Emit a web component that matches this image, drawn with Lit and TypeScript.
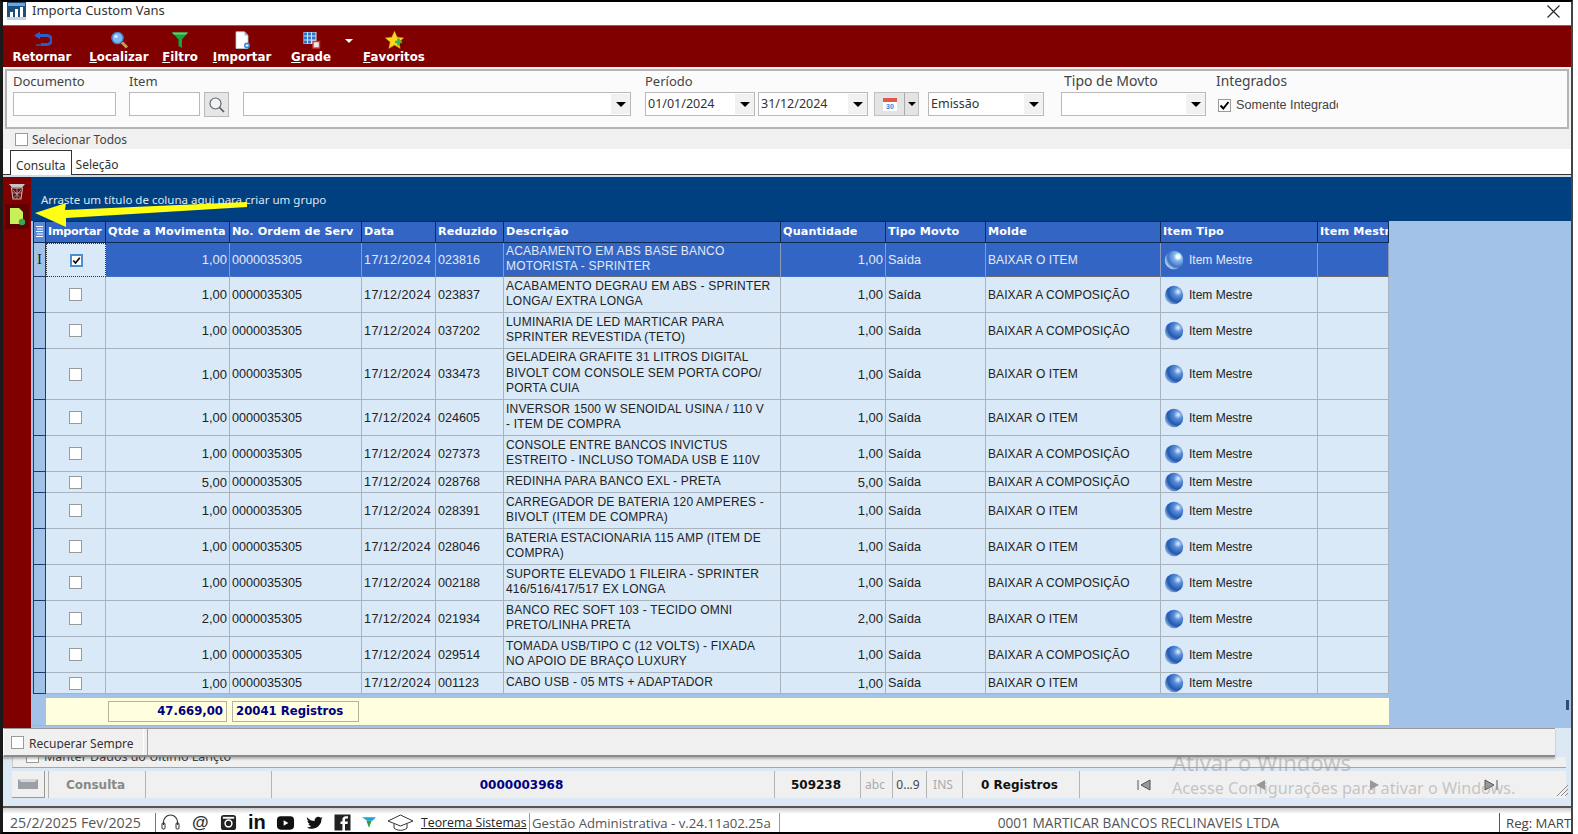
import { LitElement, html, css, svg } from "lit";
import { customElement } from "lit/decorators.js";

interface Row { q: string; red: string; d: string[]; qt: string; molde: string; h: number; }
const B = "BAIXAR O ITEM", C = "BAIXAR A COMPOSIÇÃO";
const rows: Row[] = [
  { q: "1,00", red: "023816", d: ["ACABAMENTO EM ABS BASE BANCO", "MOTORISTA - SPRINTER"], qt: "1,00", molde: B, h: 34 },
  { q: "1,00", red: "023837", d: ["ACABAMENTO DEGRAU EM ABS - SPRINTER", "LONGA/ EXTRA LONGA"], qt: "1,00", molde: C, h: 36 },
  { q: "1,00", red: "037202", d: ["LUMINARIA DE LED MARTICAR PARA", "SPRINTER REVESTIDA (TETO)"], qt: "1,00", molde: C, h: 36 },
  { q: "1,00", red: "033473", d: ["GELADEIRA GRAFITE 31 LITROS DIGITAL", "BIVOLT COM CONSOLE SEM PORTA COPO/", "PORTA CUIA"], qt: "1,00", molde: B, h: 51 },
  { q: "1,00", red: "024605", d: ["INVERSOR 1500 W SENOIDAL USINA / 110 V", "- ITEM DE COMPRA"], qt: "1,00", molde: B, h: 36 },
  { q: "1,00", red: "027373", d: ["CONSOLE ENTRE BANCOS INVICTUS", "ESTREITO - INCLUSO TOMADA USB E 110V"], qt: "1,00", molde: C, h: 36 },
  { q: "5,00", red: "028768", d: ["REDINHA PARA BANCO EXL - PRETA"], qt: "5,00", molde: C, h: 21 },
  { q: "1,00", red: "028391", d: ["CARREGADOR DE BATERIA 120 AMPERES -", "BIVOLT (ITEM DE COMPRA)"], qt: "1,00", molde: B, h: 36 },
  { q: "1,00", red: "028046", d: ["BATERIA ESTACIONARIA 115 AMP (ITEM DE", "COMPRA)"], qt: "1,00", molde: B, h: 36 },
  { q: "1,00", red: "002188", d: ["SUPORTE ELEVADO 1 FILEIRA - SPRINTER", "416/516/417/517 EX LONGA"], qt: "1,00", molde: C, h: 36 },
  { q: "2,00", red: "021934", d: ["BANCO REC SOFT 103 - TECIDO OMNI", "PRETO/LINHA PRETA"], qt: "2,00", molde: B, h: 36 },
  { q: "1,00", red: "029514", d: ["TOMADA USB/TIPO C (12 VOLTS) - FIXADA", "NO APOIO DE BRAÇO LUXURY"], qt: "1,00", molde: C, h: 36 },
  { q: "1,00", red: "001123", d: ["CABO USB - 05 MTS + ADAPTADOR"], qt: "1,00", molde: B, h: 21 },
];

const caret = html`<span class="caret"></span>`;
const globe = (pale: boolean) => html`<svg class=${pale ? "globe pale" : "globe"} viewBox="0 0 20 20" width="20" height="20">
  <defs><radialGradient id="g" cx="72%" cy="32%" r="75%"><stop offset="0" stop-color="#eaf2fc"/><stop offset=".3" stop-color="#5b90dc"/><stop offset=".75" stop-color="#2058ae"/><stop offset="1" stop-color="#86a8da"/></radialGradient></defs>
  <circle cx="10" cy="10" r="9.2" fill="url(#g)"/></svg>`;

const icoBack = svg`<path d="M3 4.5 H14 a4.2 4.2 0 0 1 0 9 H8" fill="none" stroke="#2a5ec8" stroke-width="3"/><path d="M7 .8 L1 4.5 L7 8.2Z" fill="#2a5ec8"/><path d="M3 13 h5 v2 h-5z" fill="#2f5fb0" opacity=".7"/>`;
const icoFind = svg`<circle cx="7.5" cy="7" r="5.6" fill="#7db8ef" stroke="#3d7fd0" stroke-width="1.4"/><path d="M12 11.5 L17 16.5" stroke="#c89a5a" stroke-width="3"/><circle cx="6" cy="5.5" r="1.8" fill="#d8ecff"/>`;
const icoFilter = svg`<path d="M1 1.5 H17 L11 8.5 V17 L7.5 15 V8.5Z" fill="#19a33a"/><path d="M1 1.5 H17 L15.4 3.5 H2.6Z" fill="#5bd26d"/>`;
const icoDoc = svg`<path d="M3 .8 H11.5 L15 4.5 V17.5 H3Z" fill="#fff" stroke="#bcc6d4" stroke-width=".8"/><path d="M11.5 .8 V4.5 H15Z" fill="#9fb2cc"/><circle cx="14" cy="14.5" r="3" fill="#3c86d8"/><path d="M12.5 14.5 h3 M14 13 v3" stroke="#fff" stroke-width=".9"/>`;
const icoGrid = svg`<rect x="1.5" y="1" width="13" height="12" fill="#cfe2f8"/><path d="M2 1.5 h3 v3 h-3z M6 1.5 h3 v3 h-3z M10 1.5 h3.5 v3 h-3.5z M2 5.5 h3 v3 h-3z M6 5.5 h3 v3 h-3z M10 5.5 h3.5 v3 h-3.5z M2 9.5 h3 v3 h-3z M6 9.5 h3 v3 h-3z" fill="#2f74c8"/><rect x="11" y="10.5" width="6.5" height="6.5" fill="#e9e9e9" stroke="#d33" stroke-width="1.4"/>`;
const icoStar = svg`<path d="M9.5 .2 L12.2 6.2 L18.6 6.9 L13.8 11 L15.2 17.4 L9.5 14.1 L3.8 17.4 L5.2 11 L.4 6.9 L6.8 6.2Z" fill="#ffd820" stroke="#d9a800" stroke-width=".5"/><path d="M10 11 h7 M13.5 7.5 v7" stroke="#39b54a" stroke-width="2.6"/>`;

@customElement("app-root")
export class AppRoot extends LitElement {
  static styles = css`
    :host { display: block; width: 1578px; height: 834px; overflow: hidden; position: relative; background: #fff; font-family: "Liberation Sans", Arial, sans-serif; font-size: 13px; color: #222; }
    * { box-sizing: border-box; }
    .win { width: 1573px; height: 834px; display: flex; flex-direction: column; border-top: 2px solid #000; border-left: 3px solid #1a1a1a; border-right: 2px solid #444; border-bottom: 2px solid #000; background: #dce9f5; }
    .title { height: 23px; flex: none; background: #fff; display: flex; align-items: flex-start; padding-left: 4px; gap: 6px; font-family: "Noto Sans", sans-serif; font-size: 13px; line-height: 17px; color: #333; }
    .title .x { margin-left: auto; margin-right: 11px; margin-top: 3px; width: 13px; height: 13px; }
    .toolbar { height: 42px; flex: none; background: #800000; display: flex; color: #fff; font: bold 11.8px "DejaVu Sans", sans-serif; padding-left: 9px; border-top: 1px solid #a55; }
    .tool { display: flex; flex-direction: column; align-items: center; padding-top: 5px; gap: 1px; white-space: nowrap; }
    .tool u { text-decoration-thickness: 1px; text-underline-offset: 1px; }
    .filters-wrap { height: 62px; flex: none; padding: 2px 2px 1px 2px; background: #f0f0f0; }
    .filters { height: 60px; background: #fbfbfb; border: 2px solid #b4b4b4; display: flex; padding: 0 0 0 6px; font-family: "Noto Sans", sans-serif; color: #444; }
    .fg { display: flex; flex-direction: column; }
    .lbl { height: 21px; line-height: 20px; font-size: 13px; white-space: nowrap; }
    .lbl.big { font-size: 14px; padding-left: 3px; }
    .lbl.mid { font-size: 13.8px; }
    .inp { height: 24px; background: #fff; border: 1px solid #b9b9b9; position: relative; font-size: 12.5px; line-height: 22px; padding-left: 2px; color: #333; }
    .inp .dd { position: absolute; right: 0; top: 1px; bottom: 1px; width: 19px; background: #f1f1f1; display: flex; align-items: center; justify-content: center; }
    .caret { display: block; width: 0; height: 0; border-left: 5px solid transparent; border-right: 5px solid transparent; border-top: 5px solid #000; }
    .caret.small { border-top-color: #fff; border-left-width: 4px; border-right-width: 4px; border-top-width: 4px; }
    .cwrap { padding: 13px 0 0 14px; }
    .srch { width: 25px; height: 25px; background: #e6e6e6; border: 1px solid #b9b9b9; margin-left: 4px; display: flex; align-items: center; justify-content: center; }
    .row-f { display: flex; }
    .cal { display: flex; width: 45px; height: 24px; border: 1px solid #c0c0c0; background: #e4e4e4; margin-left: 6px; }
    .cal .a { width: 30px; display: flex; align-items: center; justify-content: center; border-right: 1px solid #aaa; }
    .cal .b { flex: 1; display: flex; align-items: center; justify-content: center; }
    .cal .caret { border-left-width: 4px; border-right-width: 4px; border-top-width: 4px; }
    .chk { width: 13px; height: 13px; background: #fff; border: 1px solid #9a9a9a; display: inline-flex; align-items: center; justify-content: center; flex: none; }
    .chk.focus { border: 2px solid #4a90d0; }
    .chk svg { display: block; }
    .int { display: flex; align-items: center; gap: 5px; font: 12.6px "Liberation Sans", sans-serif; width: 122px; overflow: hidden; white-space: nowrap; height: 25px; padding: 1px 0 0 2px; }
    .sel { height: 20px; flex: none; background: #f0f0f0; display: flex; align-items: center; gap: 4px; padding: 1px 0 0 12px; font-size: 12px; color: #444; font-family: "Noto Sans", sans-serif; }
    .tabs { height: 26px; flex: none; background: #fff; border-bottom: 1px solid #333; display: flex; padding-left: 7px; font-family: "Noto Sans", sans-serif; font-size: 12px; color: #333; align-items: flex-end; }
    .tab { height: 24px; line-height: 30px; padding: 0 4px; }
    .tab.on { border: 1px solid #333; border-bottom: none; background: #fff; height: 25px; margin-bottom: -1px; padding: 0 5px; line-height: 29px; }
    .gap { height: 2px; flex: none; background: #cfdbe8; }
    .content { height: 551px; flex: none; display: flex; background: #a3c2e8; }
    .side { width: 28px; flex: none; background: #800000; display: flex; flex-direction: column; align-items: center; padding-top: 6px; }
    .side .act { width: 24px; height: 25px; background: #600000; display: flex; align-items: center; justify-content: center; margin-top: 4px; }
    .main { flex: 1; display: flex; flex-direction: column; min-width: 0; position: relative; }
    .group { height: 44px; flex: none; background: #004080; color: #dfe7f2; font-family: "Noto Sans", sans-serif; font-size: 11.5px; display: flex; align-items: center; padding: 0 0 0 10px; }
    .tbl { margin-left: 2px; width: 1356px; }
    .r { display: grid; grid-template-columns: 13px 60px 124px 132px 74px 68px 277px 105px 100px 175px 157px 71px; }
    .hd { height: 22px; background: #3366c4; color: #fff; font: bold 11.2px "DejaVu Sans", sans-serif; border-top: 1px solid #0f2a55; letter-spacing: .12px; }
    .hd > div { border-right: 1px solid #0f2a55; border-bottom: 1px solid #0f2a55; padding: 0 2px; line-height: 19px; white-space: nowrap; overflow: hidden; }
    .hd > div:first-child { background: #5a8ad6; border-left: 1px solid #0f2a55; padding: 3px 0 0 1px; }
    .hd > div.tight { letter-spacing: -.25px; }
    .c { border-right: 1px solid #a9b3bd; border-bottom: 1px solid #a9b3bd; padding: 0 2px; display: flex; align-items: center; min-width: 0; white-space: nowrap; overflow: hidden; background: #d9e9f7; color: #222; font-size: 12.6px; font-family: "Liberation Sans", sans-serif; }
    .c.date { letter-spacing: .4px; }
    .c.molde { font-size: 12px; letter-spacing: .08px; }
    .c.num { justify-content: flex-end; padding-right: 2px; font-size: 13px; }
    .c.ctr { justify-content: center; padding: 0; }
    .c.ind { background: #a3c2e8; border-left: 1px solid #1e3a6e; border-right: 1px solid #1e3a6e; border-bottom: 1px solid #1e3a6e; padding: 0; justify-content: center; color: #222; font-family: "Liberation Serif", serif; font-size: 15px; }
    .c.desc { display: block; line-height: 15.5px; padding: 3px 2px 0 2px; align-self: stretch; font-size: 12px; letter-spacing: .19px; }
    .desc-wrap { display: flex; flex-direction: column; justify-content: center; height: 100%; margin-top: -2px; }
    .sel-row .c:not(.ind):not(.imp) { background: #3366c4; color: #e3e9f5; border-bottom: 1px dotted #777; border-right-color: #8a9bb8; }
    .sel-row .c.imp { border: 1px dotted #333; }
    .c.item { gap: 5px; font-size: 12px; padding-left: 3px; }
    .globe { flex: none; }
    .globe.pale { filter: brightness(1.3) saturate(.7); }
    .foot-gap { height: 4px; flex: none; background: #a3c2e8; }
    .foot { height: 28px; flex: none; display: flex; margin-left: 2px; width: 1356px; background: #ffffe0; border-bottom: 1px solid #b5b59a; }
    .foot .i { width: 13px; background: #a3c2e8; }
    .foot .sp { width: 62px; }
    .foot .bx { height: 21px; margin-top: 3px; border: 1px solid #b4b49a; color: #000080; font: bold 11.7px "DejaVu Sans", sans-serif; line-height: 19px; padding: 0 3px; }
    .foot .b1 { width: 119px; text-align: right; margin-right: 5px; }
    .foot .b2 { width: 127px; }
    .rec { height: 29px; flex: none; background: #f0f0f0; display: flex; border-top: 1px solid #9a9a9a; border-bottom: 2px solid #8c8c8c; border-left: 1px solid #fff; margin-right: 16px; box-shadow: 0 2px 2px rgba(0,0,0,.25); position: relative; z-index: 1; }
    .rec .t { width: 140px; display: flex; align-items: center; gap: 5px; padding-left: 7px; border-right: 1px solid #fff; font-family: "Noto Sans", sans-serif; font-size: 12px; color: #333; overflow: hidden; }
    .rec .t .clip { height: 13px; line-height: 15px; overflow: hidden; display: block; white-space: nowrap; }
    .rec .r2 { flex: 1; border-left: 1px solid #a0a0a0; margin-left: 3px; }
    .manter { height: 11px; flex: none; overflow: hidden; margin-left: 9px; background: #f0f0f0; border-bottom: 1px solid #a5a5a5; display: flex; align-items: flex-end; gap: 5px; padding: 0 0 4px 13px; font-family: "Noto Sans", sans-serif; font-size: 12.5px; color: #444; line-height: 12px; margin-right: 5px; border-left: 1px solid #ccc; }
    .status { height: 27px; flex: none; margin: 3px 5px 0 9px; display: flex; gap: 3px; font-size: 13px; background: #f0f0f0; }
    .st { border-left: 1px solid #b5b5b5; display: flex; align-items: center; justify-content: center; white-space: nowrap; font-family: "DejaVu Sans", sans-serif; font-weight: bold; font-size: 12px; color: #111; }
    .st.thin { font-family: "Noto Sans", sans-serif; font-weight: normal; font-size: 12px; color: #aaa; }
    .st.thin.dark { color: #444; }
    .st.gray { color: #888; }
    .st.navy { color: #000080; }
    .w94 { width: 94px; } .w123 { width: 123px; } .w500 { width: 500px; } .w83 { width: 83px; } .w29 { width: 29px; } .w31 { width: 31px; } .w33 { width: 33px; } .w114 { width: 114px; }
    .kb { width: 33px; border: none; border-right: 1px solid #999; border-bottom: 1px solid #999; }
    .navb { flex: 1; position: relative; display: flex; justify-content: flex-start; padding-left: 57px; gap: 101.5px; }
    .below { height: 8px; flex: none; }
    .line { height: 2px; flex: none; background: #555; }
    .bar { flex: 1; background: linear-gradient(#cfcfcf, #fff 6px); display: flex; align-items: flex-end; overflow: hidden; font-family: "Open Sans", sans-serif; font-size: 13.2px; color: #555; padding-top: 5px; }
    .bar > div { height: 100%; display: flex; align-items: center; white-space: nowrap; }
    .bdate { width: 153px; padding-left: 7px; border-right: 1px solid #777; font-size: 14.2px; }
    .bicons { width: 265px; padding-left: 4px; gap: 11px; }
    .at { font: bold 17px "Liberation Sans", sans-serif; color: #333; width: 17px; }
    .in { font: bold 20px "Liberation Sans", sans-serif; color: #111; width: 17px; }
    .blink { width: 109px; color: #222; text-decoration: underline; border-right: 1px solid #999; font-size: 12.3px; }
    .bver { width: 250px; padding-left: 2px; border-right: 1px solid #999; }
    .bco { width: 720px; justify-content: center; border-right: 1px solid #555; padding-right: 2px; font-size: 13.7px; }
    .breg { flex: 1; padding-left: 6px; overflow: hidden; color: #444; }
    .arrow { position: absolute; left: 30px; top: 198px; pointer-events: none; z-index: 3; }
    .wm { position: absolute; color: rgba(150,150,150,.5); font-family: "Noto Sans", sans-serif; white-space: nowrap; pointer-events: none; z-index: 0; }
    .wm1 { left: 1172px; top: 747px; font-size: 22px; }
    .wm2 { left: 1172px; top: 777px; font-size: 16.2px; }
    .grip { position: absolute; left: 1555px; top: 783px; }
    .sb { position: absolute; left: 1566px; top: 700px; width: 3px; height: 10px; background: #3a4a66; }
  `;

  private chk(on: boolean, sel = false) {
    return html`<span class="chk ${sel ? "focus" : ""}">${on
      ? html`<svg width="11" height="11" viewBox="0 0 11 11"><path d="M1.5 5.5 L4.3 8.5 L9.5 2" fill="none" stroke="#000" stroke-width="2"/></svg>` : ""}</span>`;
  }

  private tool(icon: unknown, label: unknown, w: number, ml = 0) {
    return html`<div class="tool" style="width:${w}px;margin-left:${ml}px"><svg width="19" height="18" viewBox="0 0 19 18">${icon}</svg><span>${label}</span></div>`;
  }

  private drop(w: number, text = "", ml = 0) {
    return html`<div class="inp" style="width:${w}px;margin-left:${ml}px">${text}<span class="dd">${caret}</span></div>`;
  }

  render() {
    return html`
      <div class="win">
        <div class="title">
          <svg width="19" height="18" viewBox="0 0 19 18"><rect width="19" height="18" fill="#1c4e7e"/><rect x="1" y="1" width="17" height="3" fill="#6aa6d8"/><path d="M3 16 V10 h3 v6z M8 16 V7 h3 v9z M13 16 V5 h3 v11z" fill="#fff"/><rect y="15" width="19" height="3" fill="#c7d3de"/></svg>
          <span>Importa Custom Vans</span>
          <svg class="x" viewBox="0 0 13 13"><path d="M.5 .5 L12.5 12.5 M12.5 .5 L.5 12.5" stroke="#222" stroke-width="1.1"/></svg>
        </div>

        <div class="toolbar">
          ${this.tool(icoBack, "Retornar", 60)}
          ${this.tool(icoFind, html`<u>L</u>ocalizar`, 60, 17)}
          ${this.tool(icoFilter, html`<u>F</u>iltro`, 36, 13)}
          ${this.tool(icoDoc, html`<u>I</u>mportar`, 62, 13)}
          ${this.tool(icoGrid, html`<u>G</u>rade`, 40, 18)}
          <div class="cwrap"><span class="caret small"></span></div>
          ${this.tool(icoStar, html`<u>F</u>avoritos`, 62, 10)}
        </div>

        <div class="filters-wrap"><div class="filters">
          <div class="fg" style="width:116px"><div class="lbl">Documento</div><div class="inp" style="width:103px"></div></div>
          <div class="fg"><div class="lbl">Item</div><div class="row-f"><div class="inp" style="width:71px"></div>
            <div class="srch"><svg width="18" height="18" viewBox="0 0 18 18"><circle cx="7.5" cy="7.5" r="5.5" fill="#eef4f8" stroke="#666" stroke-width="1.2"/><path d="M11.5 11.5 L16 16" stroke="#555" stroke-width="1.6"/></svg></div>
            ${this.drop(388, "", 14)}</div></div>
          <div class="fg" style="margin-left:14px"><div class="lbl">Período</div><div class="row-f">
            ${this.drop(110, "01/01/2024")}${this.drop(110, "31/12/2024", 3)}
            <div class="cal"><div class="a"><svg width="16" height="15" viewBox="0 0 16 15"><rect x="1" y="1" width="14" height="13" fill="#fff"/><rect x="1" y="1" width="14" height="4" fill="#e2574c"/><text x="8" y="12" font-size="7" font-weight="bold" text-anchor="middle" fill="#3a7fd0" font-family="Liberation Sans">30</text></svg></div><div class="b">${caret}</div></div>
            ${this.drop(116, "Emissão", 9)}
          </div></div>
          <div class="fg" style="margin-left:17px"><div class="lbl big">Tipo de Movto</div>${this.drop(145)}</div>
          <div class="fg" style="margin-left:10px"><div class="lbl mid">Integrados</div>
            <div class="int">${this.chk(true)}<span>Somente Integrados</span></div></div>
        </div></div>

        <div class="sel">${this.chk(false)}<span>Selecionar Todos</span></div>
        <div class="tabs"><div class="tab on">Consulta</div><div class="tab">Seleção</div></div>
        <div class="gap"></div>

        <div class="content">
          <div class="side">
            <svg width="18" height="17" viewBox="0 0 18 17"><path d="M1 1 H17 L14 4.5 H4Z" fill="#c9c4c4"/><path d="M3.5 5 H14.5 L13 16 H5Z" fill="#5a1010" stroke="#c9b3b3" stroke-width="1.1"/><path d="M5 7 L12.5 15 M13 7 L5.5 15 M9 5 V16 M4 10 H14" stroke="#c9a0a0" stroke-width=".8"/></svg>
            <div class="act"><svg width="17" height="19" viewBox="0 0 17 19"><path d="M1 1 H10 L14 5 V17 H1Z" fill="#c6ef5a"/><circle cx="13" cy="15" r="3.2" fill="#3aa655"/></svg></div>
          </div>
          <div class="main">
            <div class="group">Arraste um título de coluna aqui para criar um grupo</div>
            <div class="tbl">
              <div class="r hd">
                <div><svg width="9" height="13" viewBox="0 0 9 13"><path d="M1 1.5h7M2 4h6M1 6.5h7M2 9h6M1 11.5h7" stroke="#fff" stroke-width="1"/></svg></div>
                <div class="tight">Importar</div><div>Qtde a Movimenta</div><div>No. Ordem de Serv</div><div>Data</div><div>Reduzido</div><div>Descrição</div><div>Quantidade</div><div>Tipo Movto</div><div>Molde</div><div>Item Tipo</div><div>Item Mestre</div>
              </div>
              ${rows.map((r, i) => html`
                <div class="r ${i === 0 ? "sel-row" : ""}" style="height:${r.h}px">
                  <div class="c ind">${i === 0 ? "I" : ""}</div>
                  <div class="c ctr imp">${this.chk(i === 0, i === 0)}</div>
                  <div class="c num">${r.q}</div>
                  <div class="c">0000035305</div>
                  <div class="c date">17/12/2024</div>
                  <div class="c">${r.red}</div>
                  <div class="c desc"><div class="desc-wrap">${r.d.map((l) => html`<span>${l}</span>`)}</div></div>
                  <div class="c num">${r.qt}</div>
                  <div class="c">Saída</div>
                  <div class="c molde">${r.molde}</div>
                  <div class="c item">${globe(i === 0)}<span>Item Mestre</span></div>
                  <div class="c"></div>
                </div>`)}
            </div>
            <div class="foot-gap"></div>
            <div class="foot">
              <div class="i"></div><div class="sp"></div>
              <div class="bx b1">47.669,00</div><div class="bx b2">20041 Registros</div>
            </div>
          </div>
        </div>

        <div class="rec">
          <div class="t">${this.chk(false)}<span class="clip">Recuperar Sempre</span></div><div class="r2"></div>
        </div>
        <div class="manter">${this.chk(false)}<span>Manter Dados do Último Lançto</span></div>
        <div class="status">
          <div class="st kb"><svg width="20" height="10" viewBox="0 0 20 10"><rect width="20" height="10" fill="#9aa0a6"/><path d="M0 0 L20 0 L17 3 H3Z" fill="#d5d8db"/></svg></div>
          <div class="st gray w94">Consulta</div>
          <div class="st w123"></div>
          <div class="st navy w500">0000003968</div>
          <div class="st w83">509238</div>
          <div class="st thin w29">abc</div>
          <div class="st thin dark w31">0...9</div>
          <div class="st thin w33">INS</div>
          <div class="st w114">0 Registros</div>
          <div class="st navb">
            <svg width="14" height="12" viewBox="0 0 14 12"><path d="M1 1v10M13 1 L4 6 L13 11Z" stroke="#555" fill="#999"/></svg>
            <svg width="14" height="12" viewBox="0 0 14 12"><path d="M12 1 L3 6 L12 11Z" fill="#999"/></svg>
            <svg width="14" height="12" viewBox="0 0 14 12"><path d="M2 1 L11 6 L2 11Z" fill="#999"/></svg>
            <svg width="14" height="12" viewBox="0 0 14 12"><path d="M13 1v10M1 1 L10 6 L1 11Z" stroke="#555" fill="#999"/></svg>
          </div>
        </div>
        <div class="below"></div>
        <div class="line"></div>
        <div class="bar">
          <div class="bdate">25/2/2025 Fev/2025</div>
          <div class="bicons">
            <svg width="21" height="20" viewBox="0 0 20 20"><path d="M3 12 V9 a7 7 0 0 1 14 0 V12" fill="none" stroke="#333" stroke-width="1.2"/><rect x="1.5" y="10" width="3" height="6" rx="1" fill="none" stroke="#333"/><rect x="15.5" y="10" width="3" height="6" rx="1" fill="none" stroke="#333"/></svg>
            <span class="at">@</span>
            <svg width="17" height="17" viewBox="0 0 18 18"><rect x="1" y="1" width="16" height="16" rx="3" fill="#222"/><circle cx="9" cy="10" r="3.6" fill="none" stroke="#fff" stroke-width="1.6"/><rect x="3" y="3" width="12" height="2" fill="#fff"/></svg>
            <span class="in">in</span>
            <svg width="19" height="16" viewBox="0 0 20 16"><rect x="1" y="1" width="18" height="14" rx="4" fill="#111"/><path d="M8 5 L13 8 L8 11Z" fill="#fff"/></svg>
            <svg width="17" height="15" viewBox="0 0 18 15"><path d="M1 2 C4 5 6 6 9 6 C9 2 13 0 15.5 2.4 L17.5 2 L16.3 4 C16.6 10 11 14.5 5.5 14 C3.8 14 2.3 13.5 1 12.7 C3 12.8 4.5 12.3 5.6 11.3 C3.8 11 3 10 2.6 9 L4 9 C2.3 8 1.6 6.8 1.6 5.6 L3 6 C1.2 4.8 .8 3.4 1 2Z" fill="#111"/></svg>
            <svg width="17" height="17" viewBox="0 0 17 17"><rect x=".5" y=".5" width="16" height="16" fill="#222"/><path d="M11 17 V10 H13.5 L14 7.5 H11 V6 C11 5 11.5 4.5 12.5 4.5 H14 V2.2 H12 C9.7 2.2 8.4 3.5 8.4 5.7 V7.5 H6.5 V10 H8.4 V17Z" fill="#fff"/></svg>
            <svg width="14" height="13" viewBox="0 0 16 14"><path d="M0 1 H16 L12 5 H6Z" fill="#1aa3d8"/><path d="M5 5 H11 L8 13Z" fill="#2f9e44"/></svg>
            <svg width="27" height="20" viewBox="0 0 27 20"><path d="M1 8 L13.5 2 L26 8 L13.5 13Z" fill="none" stroke="#333"/><path d="M7 11 V15 C10 18 17 18 20 15 V11" fill="none" stroke="#333"/></svg>
          </div>
          <div class="blink">Teorema Sistemas</div>
          <div class="bver">Gestão Administrativa - v.24.11a02.25a</div>
          <div class="bco">0001 MARTICAR BANCOS RECLINAVEIS LTDA</div>
          <div class="breg">Reg: MARTICAR</div>
        </div>
      </div>
      <svg class="arrow" width="222" height="32" viewBox="0 0 222 32"><path d="M5 15 L36 5 L35 12 L217 4 L217 9 L36 20 L36 29Z" fill="#ffff14"/></svg>
      <div class="wm wm1">Ativar o Windows</div>
      <div class="wm wm2">Acesse Configurações para ativar o Windows.</div>
      <div class="sb"></div>
      <svg class="grip" width="14" height="14" viewBox="0 0 14 14"><path d="M13 2 L2 13 M13 6 L6 13 M13 10 L10 13" stroke="#8a8a8a"/></svg>
    `;
  }
}
